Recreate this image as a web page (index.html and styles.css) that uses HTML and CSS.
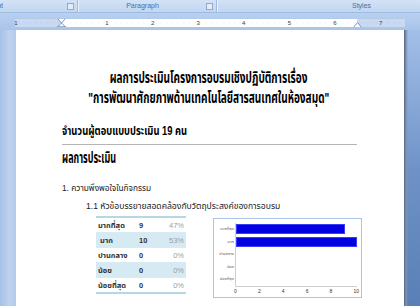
FILE: index.html
```html
<!DOCTYPE html>
<html lang="th">
  <head>
    <meta charset="UTF-8" />
    <link rel="stylesheet" href="styles.css">
    <title>ผลการประเมิน</title>
  </head>
  <body>
    <div class="ribbon">
      <div class="group group-font"><span class="group-name">Font</span><span class="launcher"></span></div>
      <div class="group group-para"><span class="group-name">Paragraph</span><span class="launcher"></span></div>
      <div class="group group-styles"><span class="group-name">Styles</span></div>
    </div>

    <div class="rulerbar">
      <div class="ruler">
        <div class="ruler-nums">
          <span>1</span><span></span><span>1</span><span>2</span><span>3</span><span>4</span><span>5</span><span>6</span><span>7</span>
        </div>
        <svg class="indent-left" width="9" height="13" viewBox="0 0 9 13">
          <path d="M0.5 0.5h8l-4 4.5z" fill="#fff" stroke="#7a96bd"/>
          <path d="M4.5 5l4 4h-8z" fill="#fff" stroke="#7a96bd"/>
          <rect x="0.5" y="9" width="8" height="3.5" fill="#eef3fa" stroke="#7a96bd"/>
        </svg>
        <svg class="indent-right" width="9" height="6" viewBox="0 0 9 6">
          <path d="M4.5 0.5l4 5h-8z" fill="#fff" stroke="#7a96bd"/>
        </svg>
      </div>
    </div>

    <div class="workspace">
      <div class="side"></div>
      <div class="page">
        <h1 class="title">
          <span class="narrow">ผลการประเมินโครงการอบรมเชิงปฏิบัติการเรื่อง</span>
          <span class="narrow">"การพัฒนาศักยภาพด้านเทคโนโลยีสารสนเทศในห้องสมุด"</span>
        </h1>
        <h2 class="count"><span class="narrow">จำนวนผู้ตอบแบบประเมิน 19 คน</span></h2>
        <h2 class="result"><span class="narrow">ผลการประเมิน</span></h2>
        <p class="item">1. ความพึงพอใจในกิจกรรม</p>
        <p class="subitem">1.1 หัวข้อบรรยายสอดคล้องกับวัตถุประสงค์ของการอบรม</p>

        <div class="stats">
          <table class="score">
            <tr><td class="label">มากที่สุด</td><td class="num">9</td><td class="pct">47%</td></tr>
            <tr class="odd"><td class="label">&nbsp;มาก</td><td class="num">10</td><td class="pct">53%</td></tr>
            <tr><td class="label">ปานกลาง</td><td class="num">0</td><td class="pct">0%</td></tr>
            <tr class="odd"><td class="label">น้อย</td><td class="num">0</td><td class="pct">0%</td></tr>
            <tr><td class="label">น้อยที่สุด</td><td class="num">0</td><td class="pct">0%</td></tr>
          </table>

          <div class="chart">
            <div class="cats">
              <span>มากที่สุด</span><span>มาก</span><span>ปานกลาง</span><span>น้อย</span><span>น้อยที่สุด</span>
            </div>
            <div class="plot">
              <div class="band"><div class="bar" style="width: 90%"></div></div>
              <div class="band"><div class="bar" style="width: 100%"></div></div>
              <div class="band"></div>
              <div class="band"></div>
              <div class="band"></div>
            </div>
            <div></div>
            <div class="axis">
              <span>0</span><span>2</span><span>4</span><span>6</span><span>8</span><span>10</span>
            </div>
          </div>
        </div>
      </div>
      <div class="shadow"></div>
    </div>
  </body>
</html>
```

FILE: styles.css
```css
body {
  margin: 0;
  width: 420px;
  height: 306px;
  overflow: hidden;
  background: #a9c4ea;
  font-family: "Liberation Sans", "Noto Sans Thai", sans-serif;
}

/* ribbon group labels */
.ribbon {
  display: flex;
  height: 12px;
  background: linear-gradient(#d3e2f6, #c2d6f0);
  border-bottom: 1px solid #9ebbe3;
  font-size: 7px;
  line-height: 12px;
  color: #4a6fa5;
  overflow: hidden;
}

.group {
  position: relative;
  display: flex;
  justify-content: center;
  border-right: 1px solid #9fbbe2;
  box-shadow: 1px 0 0 #eaf1fb;
  overflow: hidden;
}

.group-font {
  width: 77px;
  justify-content: flex-start;
}

.group-font .group-name {
  margin-left: -11px;
}

.group-para {
  width: 138px;
  margin-left: 1px;
  padding-right: 10px;
  box-sizing: border-box;
}

.group-styles {
  flex: 1;
  border-right: 0;
  box-shadow: none;
  padding-left: 86px;
}

.launcher {
  position: absolute;
  right: 3px;
  top: 3px;
  width: 5px;
  height: 5px;
  border: 1px solid #90a9cc;
  background: #e4ecf7;
}

/* ruler */
.rulerbar {
  height: 17px;
  padding: 5px 0 0 15px;
  box-sizing: border-box;
  background: linear-gradient(#b9d0ef, #a9c4ea);
}

.ruler {
  position: relative;
  width: 390px;
  height: 9px;
  overflow: hidden;
  background: #fff;
  border-top: 1px solid #b5c9e6;
  box-sizing: border-box;
}

.ruler::before,
.ruler::after {
  content: "";
  position: absolute;
  top: 0;
  bottom: 0;
  background: #c8d9f1;
}

.ruler::before {
  left: 0;
  width: 46px;
}

.ruler::after {
  left: 342px;
  right: 0;
}

.ruler-nums {
  position: relative;
  z-index: 1;
  display: flex;
  margin-left: -22px;
  height: 8px;
  font-size: 6px;
  line-height: 8px;
  color: #3b3b3b;
  background-image: radial-gradient(circle, #6f7f95 0.5px, transparent 0.7px);
  background-size: 5.7px 8px;
}

.ruler-nums span {
  flex: 0 0 45.6px;
  text-align: center;
}

.indent-left {
  position: absolute;
  left: 42px;
  top: -1px;
  z-index: 2;
}

.indent-right {
  position: absolute;
  left: 338px;
  top: 3px;
  z-index: 2;
}

/* document area */
.workspace {
  display: flex;
  height: 276px;
}

.side {
  width: 16px;
  background: linear-gradient(90deg, #a6c0e6, #bfd3ef 60%, #b3caec);
}

.page {
  width: 388px;
  background: #fff;
  padding: 38px 47px 0 45px;
  box-sizing: border-box;
  color: #000;
  overflow: hidden;
}

.shadow {
  flex: 1;
  background:
    linear-gradient(90deg, #55657c, #7d93b4 2px, transparent 4px),
    linear-gradient(#a3bfe8, #6f93c8 50%, #5a7fb6);
}

/* condensed headline face */
.narrow {
  display: inline-block;
  white-space: nowrap;
  transform: scaleX(0.67);
  transform-origin: left center;
}

.title {
  display: flex;
  flex-direction: column;
  align-items: center;
  margin: 0;
  font-size: 15px;
  line-height: 20px;
}

.title .narrow {
  transform-origin: center;
}

.count {
  margin: 15px 0 0 1px;
  font-size: 13px;
  line-height: 16px;
  padding-bottom: 5px;
  border-bottom: 1px solid #b4b4b4;
}

.count .narrow {
  transform: scaleX(0.72);
}

.result {
  margin: 3px 0 0 1px;
  font-size: 15px;
  line-height: 20px;
}

.result .narrow {
  transform: scaleX(0.6);
}

.item {
  margin: 13px 0 0 1px;
  font-size: 8.3px;
  line-height: 14px;
  color: #222;
}

.subitem {
  margin: 4px 0 0 25px;
  font-size: 8.6px;
  line-height: 14px;
  color: #222;
}

.stats {
  display: flex;
  align-items: flex-start;
  padding-left: 35px;
}

.score {
  flex: none;
  width: 90px;
  border-collapse: collapse;
  border-top: 2px solid #b6d8e6;
  border-bottom: 2px solid #b6d8e6;
  margin-top: 3px;
  font-size: 7.5px;
}

.score td {
  height: 14px;
  padding: 0 2px;
  border-bottom: 1px solid #d8ebf2;
}

.score .odd td {
  background: #d5eaf3;
}

.label,
.num {
  font-weight: bold;
  color: #333;
}

.label {
  width: 37px;
}

.pct {
  text-align: right;
  color: #a0a0a0;
}

/* bar chart */
.chart {
  flex: none;
  display: grid;
  grid-template-columns: 20px 122px;
  margin: 5px 0 0 27px;
  padding: 4px 4px 3px 1px;
  width: 149px;
  box-sizing: border-box;
  border: 1px solid #a8c4e6;
  font-size: 4px;
  color: #555;
}

.cats {
  display: flex;
  flex-direction: column;
  text-align: right;
  padding-right: 1px;
}

.cats span {
  height: 12.6px;
  line-height: 12.6px;
  white-space: nowrap;
}

.plot {
  border-left: 1px solid #cfcfcf;
  border-bottom: 1px solid #cfcfcf;
}

.band {
  height: 12.6px;
  display: flex;
  align-items: center;
}

.bar {
  height: 10px;
  background: #0000e0;
  box-shadow: inset 0 0 0 1px #3b3bff;
}

.axis {
  display: flex;
  justify-content: space-between;
  margin: 1px -2px 0 -1px;
  font-size: 5px;
  line-height: 6px;
  color: #333;
}
```
